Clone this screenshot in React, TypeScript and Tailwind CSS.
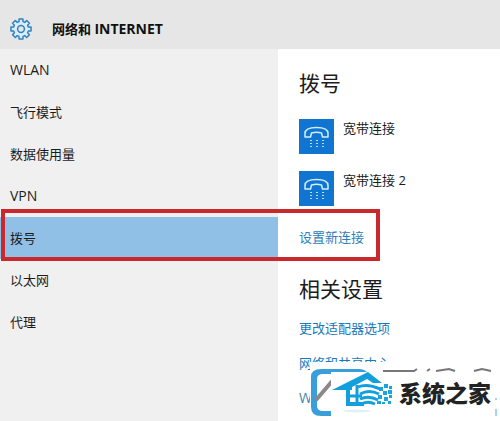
import React, { useState } from 'react';

const navItems = ['WLAN', '飞行模式', '数据使用量', 'VPN', '拨号', '以太网', '代理'];
const latinItems = ['WLAN', 'VPN'];
const connections = ['宽带连接', '宽带连接 2'];

function GearIcon() {
  const teeth = 8;
  const points: string[] = [];
  for (let i = 0; i < teeth; i++) {
    const base = (i * 2 * Math.PI) / teeth;
    [[-0.27, 7.6], [-0.19, 10.2], [0.19, 10.2], [0.27, 7.6]].forEach(([a, r]) => {
      points.push(`${(11 + r * Math.sin(base + a)).toFixed(2)},${(11 - r * Math.cos(base + a)).toFixed(2)}`);
    });
  }
  return (
    <svg viewBox="0 0 22 22" className="h-[22px] w-[22px] shrink-0" fill="#d9eefa" stroke="#3183bf" strokeWidth="1.5" strokeLinejoin="round" aria-hidden="true">
      <polygon points={points.join(' ')} />
      <circle cx="11" cy="11" r="3.4" fill="#e6e6e6" />
    </svg>
  );
}

function PhoneIcon() {
  return (
    <svg viewBox="0 0 35 35" className="h-[35px] w-[35px] shrink-0 bg-[#0f75d0]" fill="none" aria-hidden="true">
      <path
        d="M6 18V14.500C6 10 11 8.500 17.500 8.500S29 10 29 14.500V18H23.500L22.500 14Q17.500 12.500 12.500 14L11.500 18Z"
        stroke="#d3efff"
        strokeWidth="1.5"
        strokeLinejoin="round"
      />
      <g fill="#b5dcfa">
        {[22, 25, 28].map((y) =>
          [11, 17, 23].map((x) => <rect key={`${x}-${y}`} x={x} y={y - 1} width="2" height="1" />)
        )}
      </g>
    </svg>
  );
}

function HouseLogo() {
  return (
    <svg viewBox="0 0 62 44" className="h-[44px] w-[62px] shrink-0" fill="none" aria-hidden="true">
      <path d="M1 18L37 0L51 11H42L36 7L21 15V18Z" fill="#12a0dc" />
      <path d="M17 15V32H33" stroke="#12a0dc" strokeWidth="4" />
      <path d="M17 24H31M26 13V32" stroke="#12a0dc" strokeWidth="3" />
      <path d="M27 15Q36 11 49 17M29 22Q38 17 48 22M29 27Q38 23 47 28M29 33Q36 28 44 32" stroke="#12a0dc" strokeWidth="3" />
      <path
        d="M48 15h4v4h-4zM53 12h4v4h-4zM58 14h3v3h-3zM52 19h4v4h-4zM57 18h4v4h-4zM47 23h4v4h-4zM53 25h4v4h-4zM58 23h3v3h-3zM46 29h4v3h-4zM57 29h3v3h-3zM51 30h3v2h-3z"
        fill="#1ba4dc"
      />
      <ellipse cx="26" cy="39" rx="14" ry="1.5" fill="#dff2fa" />
    </svg>
  );
}

function Watermark() {
  return (
    <div className="absolute right-0 top-[362px] h-[54px] w-[190px]">
      <svg viewBox="0 0 190 54" className="absolute inset-0 h-full w-full" fill="none" aria-hidden="true">
        <path d="M0 0H190V54H0Z" fill="#fff" />
        <path d="M21 10H57Q54 7 49 7H11Q1 7 1 15V45Q1 54 11 54H21V49H13Q7 49 7 44V17Q7 12 13 12H21Z" fill="#3a9edb" />
        <path d="M6 38L24 17" stroke="#8c8788" strokeWidth="4" />
        <path d="M73 9H104L107 7M117 9L120 7M126 9L139 7L145 9M164 9L172 7L181 9" stroke="#777" strokeWidth="2" />
        <path d="M186 36V38M186 47V54" stroke="#48acda" />
      </svg>
      <div className="absolute left-[21px] right-[5px] top-[10px] flex h-[43px] items-center bg-white">
        <HouseLogo />
        <span className="ml-1.5 whitespace-nowrap text-[23px] font-black leading-none text-[#222]">系统之家</span>
      </div>
    </div>
  );
}

export default function App() {
  const [active, setActive] = useState('拨号');

  return (
    <div
      className="relative flex min-h-screen flex-col overflow-hidden bg-white text-[13px] leading-5 text-[#1c1c1c]"
      style={{ fontFamily: '"Open Sans", "Noto Sans CJK SC", sans-serif' }}
    >
      <header className="flex h-[49px] items-center gap-5 bg-[#e6e6e6] pl-[10px] pt-2">
        <GearIcon />
        <h1 className="text-[13px] font-bold text-[#111]">
          网络和 <span className="text-[14px]">INTERNET</span>
        </h1>
      </header>

      <div className="flex grow">
        <nav className="w-[278px] shrink-0 bg-[#f0f0f0]">
          {navItems.map((item) => (
            <button
              key={item}
              onClick={() => setActive(item)}
              className={`flex h-[42px] w-full items-center pl-[10px] text-left ${latinItems.includes(item) ? 'text-[14px]' : ''} ${active === item ? 'bg-[#91c0e7]' : ''}`}
            >
              {item}
            </button>
          ))}
        </nav>

        <main className="min-w-0 grow pl-[21px] pt-[18px]">
          <h2 className="text-[21px] leading-8">拨号</h2>
          <ul className="mt-5 flex flex-col gap-[17px]">
            {connections.map((name) => (
              <li key={name} className="flex gap-[9px] leading-[18px]">
                <PhoneIcon />
                <span>{name}</span>
              </li>
            ))}
          </ul>
          <a href="#new" className="mt-[21px] block text-[#2b80ba]">设置新连接</a>

          <h2 className="mt-[26px] text-[21px] leading-8">相关设置</h2>
          <div className="mt-[13px] flex flex-col gap-[15px] text-[#1879bd]">
            <a href="#adapter">更改适配器选项</a>
            <a href="#sharing">网络和共享中心</a>
            <a href="#firewall" className="text-[14px] text-[#4587ad]">W</a>
          </div>
        </main>
      </div>

      {/* Highlight around the selected row and its link */}
      <div className="pointer-events-none absolute left-px top-[209px] h-[52px] w-[379px] border-4 border-[#c9282d]" />
      <Watermark />
    </div>
  );
}
